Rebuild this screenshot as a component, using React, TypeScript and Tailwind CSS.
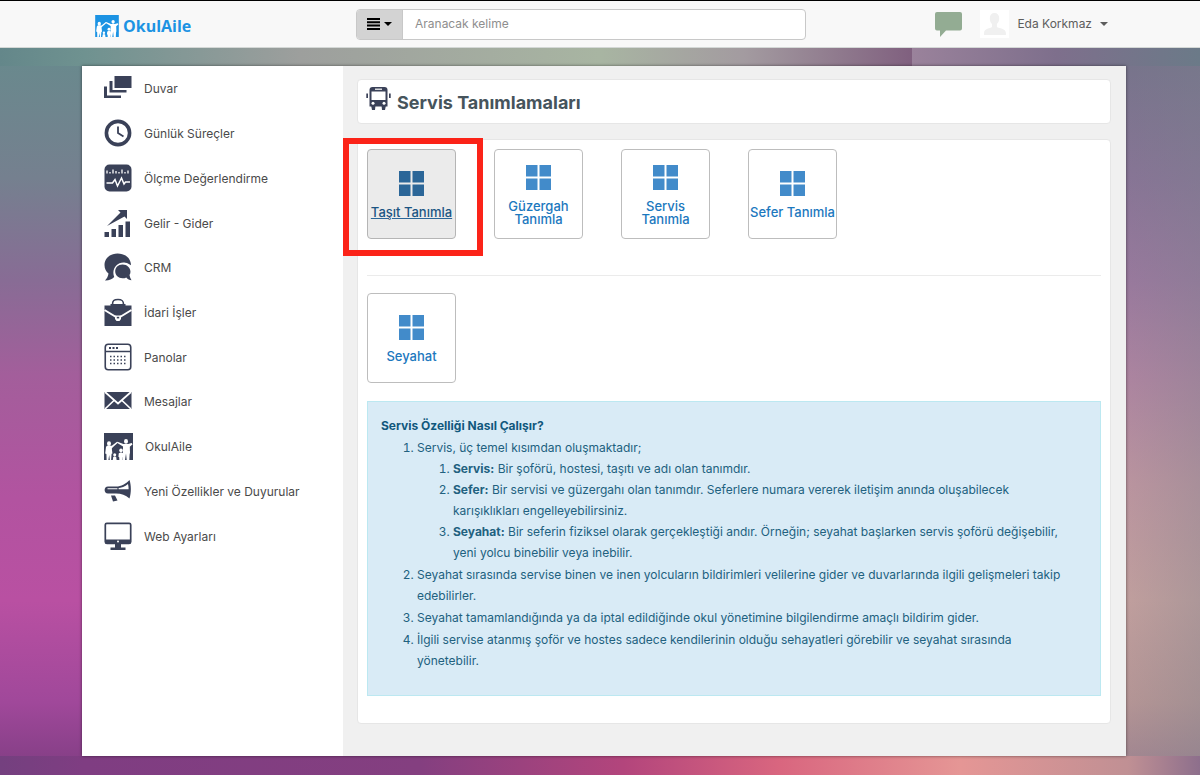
import type { ReactNode } from 'react';

type MenuItem = { label: string; icon: ReactNode };

const INK = '#3a4158';

function FamilyIcon({ color, className }: { color: string; className: string }) {
  return (
    <svg viewBox="0 0 29 27" className={className} aria-hidden="true">
      <rect width="29" height="27" fill={color} />
      <g fill="#fff">
        <ellipse cx="5" cy="10.6" rx="2" ry="2.4" />
        <ellipse cx="22" cy="8.4" rx="2" ry="2.4" />
        <circle cx="10.700" cy="21.800" r="1.500" />
        <circle cx="17" cy="17.400" r="1.800" />
        <path d="M2 14q1-1.800 3-1.400l2.800.2L13 8.700l.8 1-5 4.500-1 1.200.6 5-.8.400-.5 6.200H5.800L5.200 22l-.8 5H2.600l-.2-6-1.200-.6z" />
        <path d="M13.400 8.700l6 2.200h4.800l3.400-.9 1 1.200-2.800 2.600.2 6-.4 1.600-.3 5.600h-2.600l-.7-6.600-1 6.600h-2.200l.2-13.400-6-3.900z" />
        <path d="M9.200 24l1.500-.8 1.500.8.400 3H8.800zM14.800 20.300l2.200-1.100 2.200 1.100.4 3.400-.8.500-.2 2.800h-3.200l-.2-2.800-.8-.5z" />
      </g>
    </svg>
  );
}

const menu: MenuItem[] = [
  {
    label: 'Duvar',
    icon: (
      <g fill={INK}>
        <path d="M10.500 2h17v12h-17zM5.500 7h3v9h14v2.500h-17zM0 12.500h3v9h14V24H0z" />
      </g>
    ),
  },
  {
    label: 'Günlük Süreçler',
    icon: (
      <g fill="none" stroke={INK}>
        <circle cx="14" cy="14" r="11.600" strokeWidth="3.600" />
        <path d="M14 7.500v6.500l5.500 3.500" strokeWidth="1.800" />
      </g>
    ),
  },
  {
    label: 'Ölçme Değerlendirme',
    icon: (
      <>
        <rect x=".5" y=".5" width="27" height="27" rx="5" fill={INK} />
        <path d="M3 6.500v3M6 8v1.500M9 5.500v4M12 7v2.500M15 8v1.500M18 5.500v4M21 8v1.500M24 6.500v3" stroke="#fff" strokeWidth="1.300" />
        <path d="M2.500 19h6l2.500-3.500 2.500 6.500 4-8 2.500 6 1.500-2h4.500" fill="none" stroke="#fff" strokeWidth="1.500" />
      </>
    ),
  },
  {
    label: 'Gelir - Gider',
    icon: (
      <g fill={INK}>
        <path d="M.5 23H5v5H.5zM7.500 20H12v8H7.500zM14.500 16H19v12h-4.500zM21.500 12.500H26V28h-4.500z" />
        <path d="M3 17L16.500 3.500 14 1h9v9l-2.500-2.500z" />
      </g>
    ),
  },
  {
    label: 'CRM',
    icon: (
      <g fill={INK}>
        <path d="M13.500.5C6 .5.500 5.500.500 12c0 3.800 1.700 6.500 4 8.600-.4 3-1.700 5.200-3.500 6.900 4 .2 7-1.500 9.200-3.600-3.200-7.800 3.300-15.700 11.200-14.200 2.200.3 3.900 1.200 5.600 2.600C27 5.500 21.500.5 13.500.5z" />
        <path d="M18.500 11.500c-4.500 0-7.300 3-7.300 6.800 0 4 3.200 7 7.300 7 1.500 0 2.700-.3 3.800-.9 1.500 1.800 3.200 2.700 5.200 2.900-1-1.600-1.700-3.400-2-5.300 2.800-4.500-.8-10.500-7-10.500z" />
      </g>
    ),
  },
  {
    label: 'İdari İşler',
    icon: (
      <>
        <path d="M8.500 6.500c0-4 1.500-5 5.500-5s5.500 1 5.500 5" fill="none" stroke={INK} strokeWidth="1.600" />
        <path d="M.5 7.500h6v-1.500h15v1.500h6V28H.5z" fill={INK} />
        <path d="M.5 12l11.500 7M27.500 12L16 19" stroke="#fff" strokeWidth="2" />
        <path d="M11 17.500h6v3.500l-1.500 2h-3L11 21z" fill="#fff" />
        <rect x="12.800" y="18.800" width="2.400" height="1.600" fill={INK} />
      </>
    ),
  },
  {
    label: 'Panolar',
    icon: (
      <>
        <rect x="1.250" y="1.250" width="25.500" height="25.500" rx="3" fill="none" stroke={INK} strokeWidth="1.600" />
        <path d="M1 8.500h26" stroke={INK} strokeWidth="1.500" />
        <path d="M5 5h9" stroke={INK} strokeWidth="2" strokeDasharray="2 1.500" />
        <path d="M6 13.500h16M6 17h16M6 20.500h16" stroke={INK} strokeWidth="1.500" strokeDasharray="1.500 2" />
      </>
    ),
  },
  {
    label: 'Mesajlar',
    icon: (
      <>
        <rect x=".5" y="5" width="27" height="17" fill={INK} />
        <path d="M1 5l13 11.500L27 5M1 22l9.500-9M27 22l-9.500-9" fill="none" stroke="#fff" strokeWidth="1.700" />
      </>
    ),
  },
  { label: 'OkulAile', icon: null },
  {
    label: 'Yeni Özellikler ve Duyurular',
    icon: (
      <>
        <path d="M25.500 3c1.800 5 1.800 13 0 18.500-4-3.500-8-5-13.500-5H4c-4.500 0-4.500-7 0-7h8c5.500 0 9.500-2.500 13.500-6.500z" fill={INK} />
        <path d="M3.500 11.300h10c4-.3 7.500-1.800 10.500-4.300.5 2 .6 3.600.6 5.200H3.500z" fill="#fff" />
        <path d="M14 10v3" stroke={INK} strokeWidth="1.200" />
        <path d="M7 18.500h4l2.500 5-4.500 1z" fill={INK} />
      </>
    ),
  },
  {
    label: 'Web Ayarları',
    icon: (
      <>
        <rect x="1.300" y="1.300" width="25.400" height="20" rx="1.500" fill="none" stroke={INK} strokeWidth="1.700" />
        <path d="M1 17.500h26v4H1zM11 21.500h6v4h4.500V28h-15v-2.500H11z" fill={INK} />
        <circle cx="14" cy="19.500" r="1" fill="#fff" />
      </>
    ),
  },
];

function TilesIcon() {
  return (
    <svg viewBox="0 0 25 25" className="size-[25px]" fill="currentColor" aria-hidden="true">
      <path d="M0 0h11.500v11.500H0zM13.500 0H25v11.500H13.500zM0 13.500h11.500V25H0zM13.500 13.500H25V25H13.500z" />
    </svg>
  );
}

function Tile({ label, active = false }: { label: string; active?: boolean }) {
  return (
    <a
      href="#"
      className={
        active
          ? 'flex h-[90px] w-[89px] flex-col items-center justify-center gap-2.5 rounded border border-[#b5b5b5] bg-[#ebebeb] pt-0.5 text-center text-[#2b6698] underline'
          : 'flex h-[90px] w-[89px] flex-col items-center justify-center gap-2.5 rounded border border-[#bdbdbd] bg-white pt-0.5 text-center text-[#428bca]'
      }
    >
      <TilesIcon />
      <span className={active ? 'text-[13px] leading-[13px] font-medium text-[#1b5583]' : 'text-[13px] leading-[13px] font-medium text-[#1c78be]'}>
        {label}
      </span>
    </a>
  );
}

function Caret() {
  return <span className="border-x-4 border-t-4 border-x-transparent border-t-current" />;
}

function Header() {
  return (
    <header className="flex h-12 items-center border-t border-b border-t-black border-b-[#d4d8d6] bg-[#f8f8f8] pr-[92px] pl-[95px]">
      <a href="#" className="flex w-[261px] shrink-0 items-center gap-1 pt-1 text-[#1c93e3]">
        <FamilyIcon color="#1c93e3" className="h-[22px] w-6" />
        <span className="font-['Open_Sans',sans-serif] text-base leading-5 font-bold">OkulAile</span>
      </a>
      <form className="flex h-[31px] w-[450px] overflow-hidden rounded border border-[#c8c8c8] bg-white">
        <button type="button" aria-label="Arama türü" className="flex w-[46px] shrink-0 items-center justify-center gap-1 border-r border-[#c8c8c8] bg-[#d3d3d3] text-black">
          <svg viewBox="0 0 13 12" className="h-3 w-[13px]" fill="currentColor" aria-hidden="true">
            <path d="M0 0h13v2H0zM0 3.300h13v2H0zM0 6.600h13v2H0zM0 10h13v2H0z" />
          </svg>
          <Caret />
        </button>
        <input type="text" aria-label="Aranacak kelime" placeholder="Aranacak kelime" className="min-w-0 flex-1 px-3 text-xs placeholder:text-[#8e8e8e]" />
      </form>
      <div className="ml-auto flex items-center">
        <button type="button" aria-label="Mesajlar" className="mr-[18px]">
          <svg viewBox="0 0 27 25" className="h-[25px] w-[27px]" fill="#93ac93" aria-hidden="true">
            <path d="M2 0h23q2 0 2 2v14.500q0 2-2 2H11L5 25v-6.500H2q-2 0-2-2V2Q0 0 2 0z" />
          </svg>
        </button>
        <button type="button" className="flex items-center gap-2 text-xs text-[#5d5d5d]">
          <svg viewBox="0 0 29 28" className="h-7 w-[29px]" aria-hidden="true">
            <rect width="29" height="28" fill="#fff" />
            <path d="M14.500 3c3 0 4.700 2 4.700 5.300 0 2.700-1 4.500-2.300 5.700v3c2 1.500 9 1.300 9 6v2H4v-2c0-4.700 6.300-4.500 8-6v-3c-1.300-1.200-2.200-3-2.200-5.700C9.800 5 11.500 3 14.500 3z" fill="#f0f0f0" />
          </svg>
          <span>Eda Korkmaz</span>
          <Caret />
        </button>
      </div>
    </header>
  );
}

function Sidebar() {
  return (
    <nav className="w-[261px] shrink-0 bg-white pl-[22px]">
      <ul className="grid h-[492px] auto-rows-fr">
        {menu.map((item) => (
          <li key={item.label} className="flex items-center">
            <a href="#" className="flex items-center gap-3 text-xs text-[#4a4a4a]">
              {item.icon ? (
                <svg viewBox="0 0 28 28" className="size-7" aria-hidden="true">
                  {item.icon}
                </svg>
              ) : (
                <FamilyIcon color={INK} className="h-[27px] w-[29px]" />
              )}
              <span className="pt-0.5">{item.label}</span>
            </a>
          </li>
        ))}
      </ul>
    </nav>
  );
}

function HelpBox() {
  return (
    <section className="mt-[18px] border border-[#bce8f1] bg-[#d9ebf6] pt-[13px] pr-[30px] pb-6 pl-[13px] text-xs leading-[21px] text-[#21617f]">
      <h2 className="font-bold text-[#11587d]">Servis Özelliği Nasıl Çalışır?</h2>
      <ol className="list-decimal pl-9 [&>li]:pt-px">
        <li>
          Servis, üç temel kısımdan oluşmaktadır;
          <ol className="list-decimal pl-9">
            <li><b>Servis:</b> Bir şoförü, hostesi, taşıtı ve adı olan tanımdır.</li>
            <li><b>Sefer:</b> Bir servisi ve güzergahı olan tanımdır. Seferlere numara vererek iletişim anında oluşabilecek karışıklıkları engelleyebilirsiniz.</li>
            <li><b>Seyahat:</b> Bir seferin fiziksel olarak gerçekleştiği andır. Örneğin; seyahat başlarken servis şoförü değişebilir, yeni yolcu binebilir veya inebilir.</li>
          </ol>
        </li>
        <li>Seyahat sırasında servise binen ve inen yolcuların bildirimleri velilerine gider ve duvarlarında ilgili gelişmeleri takip edebilirler.</li>
        <li>Seyahat tamamlandığında ya da iptal edildiğinde okul yönetimine bilgilendirme amaçlı bildirim gider.</li>
        <li>İlgili servise atanmış şoför ve hostes sadece kendilerinin olduğu sehayatleri görebilir ve seyahat sırasında yönetebilir.</li>
      </ol>
    </section>
  );
}

export default function App() {
  return (
    <div className="flex min-h-screen flex-col font-[Inter,sans-serif]">
      <Header />
      {/* Layers: top strip, bottom strip, left half, right half */}
      <div className="flex flex-1 flex-col bg-[image:linear-gradient(90deg,#64878a_0%,#6f9290_7%,#9d9f9d_25%,#a8b5a2_50%,#a39ba0_62%,#80607f_76%,#9a829b_76%,#7e6f8c_88%,#6b7a88_100%),linear-gradient(90deg,#74407f_0%,#7f3d82_7%,#843f80_35%,#b3457c_52%,#d9667f_65%,#e59695_80%,#c09094_94%,#8d6f8c_100%),linear-gradient(180deg,#688a8d_0%,#75808f_18%,#886c95_32%,#a35e9b_45%,#b253a0_62%,#b950a2_76%,#a0489a_90%,#7f3d82_100%),linear-gradient(90deg,transparent_86%,rgba(120,130,140,0.45)_100%),linear-gradient(180deg,#746f89_0%,#8c7098_18%,#a376a2_32%,#bd84a6_45%,#d09aa5_60%,#d8a8a3_76%,#c89b98_90%,#a98290_100%)] bg-[length:100%_18px,100%_19px,50%_100%,100%_100%,50%_100%] bg-[position:0_0,0_100%,0_0,0_0,100%_0] bg-no-repeat pt-[18px] pr-[74px] pb-[19px] pl-[82px]">
        <div className="flex flex-1 bg-[#f0f0f0] shadow-[0_0_3px_rgba(0,0,0,0.5)]">
          <Sidebar />
          <main className="min-w-0 flex-1 pt-[13px] pr-[15px] pb-8 pl-[14px]">
            <div className="flex h-[45px] items-center gap-1.5 rounded border border-[#e6e6e6] bg-white px-2">
              <svg viewBox="0 0 25 25" className="-mt-1.5 size-[25px]" aria-hidden="true">
                <path d="M6.500 1h12q3 0 3 3v16.500h-18V4q0-3 3-3z" fill={INK} />
                <path d="M5.500 5.500h14v8.500h-14z" fill="#fff" />
                <path d="M9 3.200h7" stroke="#fff" strokeWidth="1.200" />
                <circle cx="7" cy="17.300" r="1.500" fill="#fff" />
                <circle cx="18" cy="17.300" r="1.500" fill="#fff" />
                <path d="M5 19h4.500l-.5 5H6zM15.500 19H20l-1 5h-3zM.3 7.500H2V12H.3zM23 7.500h1.700V12H23z" fill={INK} />
              </svg>
              <h1 className="pt-0.5 text-lg font-bold text-[#46545c]">Servis Tanımlamaları</h1>
            </div>
            <div className="mt-[15px] rounded border border-[#e6e6e6] bg-white px-[9px] pt-[9px] pb-[27px]">
              <div className="flex gap-[38px] border-b border-[#ebebeb] pb-9">
                <div className="relative">
                  <Tile label="Taşıt Tanımla" active />
                  <div className="pointer-events-none absolute -top-[11px] -left-[24px] h-[118px] w-[140px] border-[6px] border-[#fb2318]" />
                </div>
                <Tile label="Güzergah Tanımla" />
                <Tile label="Servis Tanımla" />
                <Tile label="Sefer Tanımla" />
              </div>
              <div className="pt-[17px]">
                <Tile label="Seyahat" />
              </div>
              <HelpBox />
            </div>
          </main>
        </div>
      </div>
    </div>
  );
}
